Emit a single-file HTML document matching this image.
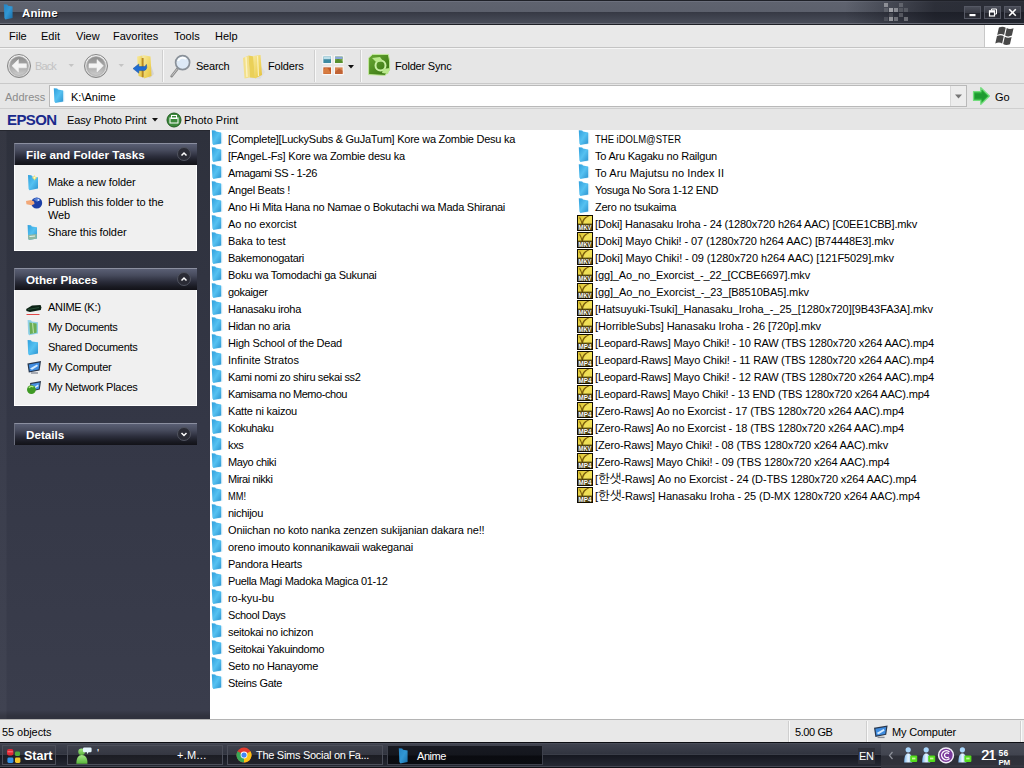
<!DOCTYPE html>
<html lang="en"><head><meta charset="utf-8"><title>Anime</title>
<style>
*{box-sizing:border-box;margin:0;padding:0}
html,body{width:1024px;height:768px;overflow:hidden;background:#fff}
body{position:relative;font-family:"Liberation Sans","NanumGothic","Noto Sans CJK KR",sans-serif;font-size:11px;color:#000;line-height:13px}
.abs{position:absolute}
#title{position:absolute;left:0;top:0;width:1024px;height:25px;background:#3b3e4a}
#title .g1{position:absolute;left:0;top:1px;width:1024px;height:22px;background:linear-gradient(90deg,rgba(14,16,24,0) 0,rgba(14,16,24,0) 845px,rgba(14,16,24,.62) 935px,rgba(14,16,24,.66) 1024px)}
#title .hi{position:absolute;left:0;top:1px;width:1024px;height:11px;background:linear-gradient(180deg,#6c707d 0,#6c707d 1px,#5f636f 1px,#5c606c 100%)}
#title .lo{position:absolute;left:0;top:12px;width:1024px;height:12px;background:linear-gradient(180deg,#363944 0,#474b57 10px,#474b57 11px,#6a6d78 11px,#6a6d78 12px)}
#title .tl{position:absolute;left:0;top:0;width:1024px;height:1px;background:#1f2128}
#title .bl{position:absolute;left:0;top:24px;width:1024px;height:1px;background:#1d1f25}
#title .cap{position:absolute;left:22px;top:7px;font-weight:bold;font-size:11.5px;color:#fff;text-shadow:1px 1px 0 #15161b;letter-spacing:.1px}
.wb{position:absolute;top:6px;width:17px;height:13px;border:1px solid #555864;background:linear-gradient(180deg,#4a4d58 0,#3a3c46 50%,#22242c 51%,#2b2d36 100%)}
#menu{position:absolute;left:0;top:25px;width:1024px;height:23px;background:#e9e9e9;border-bottom:1px solid #c4c4c4}
#menu span{position:absolute;top:5px;font-size:11px}
#logo{position:absolute;left:984px;top:25px;width:40px;height:22px;background:#fff;border-left:1px solid #c8c8c8}
#tb{position:absolute;left:0;top:48px;width:1024px;height:36px;background:#e6e6e6;border-bottom:1px solid #c9c9c9;box-shadow:inset 0 1px 0 #f6f6f6}
#tb .sep{position:absolute;top:2px;width:2px;height:32px;border-left:1px solid #cfcfcf;border-right:1px solid #f8f8f8}
#tb .lb{position:absolute;top:12px;font-size:11px}
#addr{position:absolute;left:0;top:84px;width:1024px;height:25px;background:#e6e6e6;border-bottom:1px solid #cfcfcf}
#addr .in{position:absolute;left:49px;top:1px;width:918px;height:22px;background:#fff;border:1px solid #b9b9b9}
#eps{position:absolute;left:0;top:109px;width:1024px;height:21px;background:#e6e6e6}
#side{position:absolute;left:0;top:130px;width:210px;height:589px;background:linear-gradient(90deg,rgba(255,255,255,.03) 0,rgba(255,255,255,.03) 6px,rgba(255,255,255,0) 7px),linear-gradient(180deg,#2e313c 0,#343746 50%,#3a3d4c 98.5%,#30323e 99.5%,#30323e 100%);box-shadow:inset 0 1px 0 #25272f}
.ph{position:absolute;left:14px;width:183px;height:22px;background:linear-gradient(180deg,#5a5f74 0,#474b5d 30%,#2b2d3b 60%,#191a22 85%,#121218 100%);border-top:1px solid #8b8fa0;border-left:1px solid #6a6d7c;color:#fff;font-weight:bold;font-size:11.7px;padding:4px 0 0 11px}
.ph .c{position:absolute;right:6px;top:3px;width:14px;height:14px;border-radius:50%;border:1px solid #50535f;background:#2a2b35}
.pb{position:absolute;left:14px;width:183px;background:#f0f0f0;box-shadow:inset -1px -1px 0 #fff,inset 1px 0 0 #fff}
.pb .t{position:absolute;left:34px;font-size:11px;white-space:nowrap}
.pb svg{position:absolute}
#files{position:absolute;left:210px;top:130px;width:814px;height:589px;background:#fff}
.it{position:absolute;height:17px;white-space:nowrap}
.it .ic{position:absolute;left:0;top:0}
.it .tx{position:absolute;left:18px;top:3px;font-size:11px;line-height:13px}
.it.r .tx{left:18px}
.vl{font-family:"Liberation Sans",sans-serif;font-weight:bold;font-size:7px;fill:#fff;stroke:#1e1700;stroke-width:.5px;paint-order:stroke}
#st{position:absolute;left:0;top:719px;width:1024px;height:23px;background:#e8e8e8;border-top:1px solid #b4b4b4}
#st span{position:absolute;top:6px;white-space:nowrap}
#tk{position:absolute;left:0;top:742px;width:1024px;height:26px;background:linear-gradient(180deg,#0d0e13 0,#0d0e13 1px,#4a4d59 1px,#4a4d59 2px,#3f424e 2px,#31343f 12px,#3a3d48 12px,#3a3d48 13px,#151720 13px,#262933 24px,#444753 24px,#444753 25px,#111217 25px,#111217 26px)}
.tbtn{position:absolute;top:3px;height:20px;border:1px solid #4c4f5a;background:linear-gradient(180deg,#3e414c 0,#353742 48%,#1c1d24 52%,#22232b 100%);color:#fff;font-size:11px}
.tbtn span{position:absolute;top:3px;white-space:nowrap}

#title .px{position:absolute;width:4px;height:4px;background:#fff}

</style></head><body>
<svg width="0" height="0" style="position:absolute">
<defs>
<linearGradient id="fg" x1="0" y1="0" x2="1" y2="1"><stop offset="0" stop-color="#2f9fdc"/><stop offset=".5" stop-color="#55c1f1"/><stop offset="1" stop-color="#2c93cf"/></linearGradient>
<linearGradient id="fs" x1="0" y1="0" x2="1" y2="0"><stop offset="0" stop-color="#bfe4f8"/><stop offset="1" stop-color="#ffffff"/></linearGradient><g id="fold"><path d="M8.5 2.6 L13.6 3.4 L13.6 13.6 L8.5 14.4Z" fill="url(#fs)"/><path d="M1.8 0.2 L5.2 0.5 L6 1.6 L11.2 2.4 L11.2 13.6 L3.4 15 L2.4 13.6 Z" fill="url(#fg)"/></g><g id="fold2"><path d="M1.8 0.2 L5.2 0.5 L6 1.6 L10.6 2.4 L10.6 13.2 L3.4 14.6 L2.4 13.2 Z" fill="url(#fg2)"/></g><linearGradient id="fg2" x1="0" y1="0" x2="1" y2="1"><stop offset="0" stop-color="#2583c2"/><stop offset=".5" stop-color="#3197d4"/><stop offset="1" stop-color="#1a6ca6"/></linearGradient>
<linearGradient id="vg" x1="0" y1="0" x2="1" y2="1"><stop offset="0" stop-color="#d9bf2c"/><stop offset=".5" stop-color="#f2e25a"/><stop offset="1" stop-color="#e0c838"/></linearGradient>
<g id="vid"><rect x="0" y="0" width="16" height="16" fill="#120d00"/><rect x="1" y="1" width="14" height="14" fill="url(#vg)"/><path d="M2 2.5 C3.2 4.5 4 6.5 4.6 9 L6 9 C6.5 5.5 8.5 2.8 12.5 1 L10.5 1 C7.5 2.2 5.8 4.2 5 6.8 C4.6 5.2 4 3.8 3.2 2.5Z" fill="#7a5c0c"/><rect x="1" y="8.6" width="14" height="6.4" fill="#3a2c02" opacity=".8"/></g>
</defs>
</svg>
<div id="title"><div class="hi"></div><div class="lo"></div><div class="g1"></div><div class="tl"></div><div class="bl"></div><div class="px" style="left:884px;top:3px;opacity:0.38"></div><div class="px" style="left:899px;top:3px;opacity:0.18"></div><div class="px" style="left:884px;top:8px;opacity:0.12"></div><div class="px" style="left:889px;top:8px;opacity:0.50"></div><div class="px" style="left:894px;top:8px;opacity:0.38"></div><div class="px" style="left:899px;top:8px;opacity:0.12"></div><div class="px" style="left:904px;top:8px;opacity:0.14"></div><div class="px" style="left:889px;top:13px;opacity:0.12"></div><div class="px" style="left:899px;top:13px;opacity:0.20"></div><div class="px" style="left:884px;top:17px;opacity:0.12"></div><div class="px" style="left:889px;top:17px;opacity:0.48"></div><div class="px" style="left:894px;top:17px;opacity:0.30"></div><div class="px" style="left:904px;top:17px;opacity:0.30"></div>
<svg class="abs" style="left:2px;top:4px" width="14" height="16" viewBox="0 0 14 15" preserveAspectRatio="none"><use href="#fold2"/></svg>
<div class="cap">Anime</div>
<div class="wb" style="left:964px"><svg width="15" height="11"><rect x="4.5" y="7" width="6" height="2.2" fill="#fff"/></svg></div>
<div class="wb" style="left:984px"><svg width="15" height="11"><path d="M6.5 3.5 V2 H11.5 V7 H10" fill="none" stroke="#fff" stroke-width="1"/><rect x="4.5" y="4" width="5" height="5" fill="none" stroke="#fff" stroke-width="1.2"/><rect x="4" y="3.5" width="6" height="2" fill="#fff"/></svg></div>
<div class="wb" style="left:1004px"><svg width="15" height="11"><path d="M4.2 2.2 L10.8 8.8 M10.8 2.2 L4.2 8.8" stroke="#fff" stroke-width="1.6"/></svg></div>
</div>
<div id="menu"><span style="left:9px">File</span><span style="left:41px">Edit</span><span style="left:76px">View</span><span style="left:113px">Favorites</span><span style="left:174px">Tools</span><span style="left:215px">Help</span>
<div id="logo" style="top:0"><svg width="39" height="22" viewBox="0 0 39 22"><g fill="#484848" transform="translate(9.6,1.4) scale(1.14,1.07) skewX(-12)"><path d="M4 1 C6 0 8 0 10 1.2 L10 8 C8 6.8 6 6.8 4 8Z"/><path d="M11 1.6 C13 2.8 15 2.8 17 1.8 L17 8.6 C15 9.6 13 9.6 11 8.4Z"/><path d="M4 9 C6 8 8 8 10 9.2 L10 16 C8 14.8 6 14.8 4 16Z"/><path d="M11 9.6 C13 10.8 15 10.8 17 9.8 L17 16.6 C15 17.6 13 17.6 11 16.4Z"/></g></svg></div>
</div>
<div id="tb">
<svg class="abs" style="left:0;top:0" width="420" height="36" viewBox="0 48 420 36">
<defs>
<linearGradient id="bg1" x1="0" y1="0" x2="0" y2="1"><stop offset="0" stop-color="#f2f2f2"/><stop offset="1" stop-color="#c9c9c9"/></linearGradient>
<linearGradient id="bg2" x1="0" y1="0" x2="0" y2="1"><stop offset="0" stop-color="#8e8e8e"/><stop offset=".55" stop-color="#ababab"/><stop offset="1" stop-color="#cdcdcd"/></linearGradient>
<linearGradient id="yg" x1="0" y1="0" x2="1" y2="1"><stop offset="0" stop-color="#f7e9a0"/><stop offset=".6" stop-color="#efd45c"/><stop offset="1" stop-color="#e3bf3c"/></linearGradient>
<linearGradient id="gg" x1="0" y1="0" x2="1" y2="1"><stop offset="0" stop-color="#6aaa34"/><stop offset="1" stop-color="#34700f"/></linearGradient>
<g id="navc"><circle cx="0" cy="0" r="11.5" fill="url(#bg1)" stroke="#858585"/><circle cx="0" cy="0" r="9.4" fill="url(#bg2)" stroke="#a8a8a8" stroke-width=".6"/></g>
</defs>
<use href="#navc" x="19" y="66"/><path d="M12 65.8 L18.4 59.6 L18.4 63.8 L26.4 63.8 L26.4 67.8 L18.4 67.8 L18.4 72Z" fill="#f4f4f4" stroke="#f4f4f4" stroke-width=".6" stroke-linejoin="round"/>
<path d="M68.5 64 H74 L71.25 67Z" fill="#c4c4c4"/>
<use href="#navc" x="96" y="66"/><path d="M103.4 65.8 L97 59.6 L97 63.8 L89 63.8 L89 67.8 L97 67.8 L97 72Z" fill="#f4f4f4" stroke="#f4f4f4" stroke-width=".6" stroke-linejoin="round"/>
<path d="M118.5 64 H124 L121.25 67Z" fill="#c4c4c4"/>
<!-- up folder -->
<path d="M149 60 L154 74 L150 78 L146 76Z" fill="#d4d4d4"/>
<path d="M137 56.5 L142.5 55.5 L143 77.5 L138.5 76Z" fill="url(#yg)"/>
<path d="M143 55 L150.5 56.5 L151.5 76 L144 78.5Z" fill="url(#yg)"/>
<path d="M141.6 58 L143.6 58 L143.8 77.5 L141.8 77Z" fill="#b98a20"/>
<path d="M133 68.6 L138.8 64 L138.8 66.6 L143.6 66.6 C145 66.6 146 65.6 146.4 64.4 L146.8 67.4 C146.4 69.6 145 70.6 143.6 70.6 L138.8 70.6 L138.8 73.2Z" fill="#1f6cd2" stroke="#184f9e" stroke-width=".5"/>
<!-- search -->
<path d="M177.6 68.6 L171.6 76.2" stroke="#8b8b8b" stroke-width="2.6" stroke-linecap="round"/>
<path d="M177.2 69 L172 75.6" stroke="#c9c9c9" stroke-width="1" stroke-linecap="round"/>
<circle cx="182.6" cy="62.6" r="7" fill="#dde9f6" stroke="#8a9199" stroke-width="1.7"/>
<path d="M178 61 A5 5 0 0 1 186 59" stroke="#ffffff" stroke-width="2" fill="none" opacity=".9"/>
<!-- folders -->
<path d="M258 62 L265 72 L260 79 L250 78Z" fill="#dadada" opacity=".7"/>
<path d="M243 58 L248.5 55.5 L250 77.5 L244.5 78.5Z" fill="#f3e08a"/>
<path d="M248.5 55.5 L254 56.5 L255 78 L250 77.5Z" fill="#ead058"/>
<path d="M253 56 L260.5 55 L262 75 L255 78.5Z" fill="url(#yg)"/>
<path d="M246 57 L247 77" stroke="#fbf2c4" stroke-width="1.4"/>
<path d="M257.5 56 L258.5 76" stroke="#faf0bc" stroke-width="1.2"/>
<!-- views -->
<g stroke="#fbfbfb" stroke-width="1.1"><rect x="322.8" y="56" width="8.8" height="7.6" fill="#3f8aa2"/><rect x="334.4" y="56" width="8.8" height="7.6" fill="#74a440"/><rect x="322.8" y="66.8" width="8.8" height="7.8" fill="#c25a28"/><rect x="334.4" y="66.8" width="8.8" height="7.8" fill="#d68450"/></g><path d="M323.4 70 a3 3 0 0 1 5 -1 l2.6 4.8 h-7.6z" fill="#e08a4a" opacity=".7"/><path d="M335 72 l4 -3.6 l3.6 2.4 v3.2 h-7.6z" fill="#b8552a" opacity=".7"/><path d="M335 61 l3 -2.4 l4.6 3 v1.4 h-7.6z" fill="#4f8a2a" opacity=".8"/>
<rect x="323.4" y="56.6" width="7.4" height="2.6" fill="#bfe0ea"/><rect x="335" y="56.6" width="7.6" height="2.4" fill="#8aa6d8"/>
<path d="M348 65 H354 L351 68.4Z" fill="#101010"/>
<!-- folder sync -->
<path d="M368.6 58 L372.5 54.4 L388.4 54.4 L389.6 61 L389.6 70 L385 75.4 L368.6 74.6Z" fill="url(#gg)" stroke="#c2eb9a" stroke-width="1"/>
<circle cx="380.5" cy="65.5" r="5" fill="none" stroke="#c9f0a4" stroke-width="2"/>
<path d="M372 58 L380 57 L383 61 L376 62Z" fill="#b9e88c"/><path d="M383 69 L390 68 L388 74 L382 73Z" fill="#b9e88c"/>
</svg>
<span class="lb" style="left:35px;color:#c2c2c2;letter-spacing:-.9px">Back</span>
<div class="sep" style="left:162px"></div>
<span style="letter-spacing:-0.227px;left:196px" class="lb">Search</span>
<span style="letter-spacing:-0.170px;left:268px" class="lb">Folders</span>
<div class="sep" style="left:314px"></div>
<div class="sep" style="left:360px"></div>
<span style="letter-spacing:-0.200px;left:395px" class="lb">Folder Sync</span>
</div>
<div id="addr"><span class="abs" style="left:5px;top:7px;color:#8c8c8c">Address</span>
<div class="in"><svg class="abs" style="left:2px;top:2px" width="16" height="16" viewBox="0 0 16 16"><use href="#fold"/></svg><span class="abs" style="left:21px;top:5px">K:\Anime</span></div>
<div class="abs" style="left:950px;top:2px;width:16px;height:20px;background:#ededed;border-left:1px solid #d9d9d9"></div><svg class="abs" style="left:955px;top:10px" width="8" height="6"><path d="M0 0.5H7L3.5 4.5Z" fill="#777"/></svg>
<svg class="abs" style="left:972px;top:2px" width="20" height="20"><path d="M1.5 5.6 L8.8 5.6 L8.8 1.6 L17.4 10 L8.8 18.4 L8.8 14.4 L1.5 14.4Z" fill="#2bb03a" stroke="#72dc7c" stroke-width="1.2" stroke-linejoin="round"/><path d="M3 7.4 L10.2 7.4 L10.2 5 L15.2 10 L10.2 15 L10.2 12.6 L3 12.6Z" fill="#1e9a30"/></svg>
<span class="abs" style="left:995px;top:7px">Go</span>
</div>
<div id="eps"><span class="abs" style="left:7px;top:3px;font-weight:bold;font-size:15px;line-height:16px;color:#1a2a8c;letter-spacing:-.6px">EPSON</span>
<span class="abs" style="left:67px;top:5px;letter-spacing:-.15px">Easy Photo Print</span>
<svg class="abs" style="left:152px;top:9px" width="7" height="5"><path d="M0 0H6L3 3.5Z" fill="#111"/></svg>
<svg class="abs" style="left:166px;top:3px" width="16" height="16"><circle cx="8" cy="8" r="7" fill="#3c8a3c" stroke="#1f5c20"/><rect x="4" y="6" width="8" height="5" fill="none" stroke="#fff"/><rect x="5.5" y="3.5" width="5" height="3" fill="none" stroke="#fff"/></svg>
<span class="abs" style="left:184px;top:5px">Photo Print</span>
</div>

<div id="side">
<div class="ph" style="top:13px">File and Folder Tasks<div class="c"><svg width="12" height="12"><path d="M3.5 7.5 L6 5 L8.5 7.5" stroke="#fff" stroke-width="1.5" fill="none"/></svg></div></div>
<div class="pb" style="top:35px;height:86px">
<svg style="left:0;top:0" width="183" height="86" viewBox="14 165 183 86">
<path d="M28 175 L31.4 175.3 L32.2 176.4 L38 177.2 L38 188.6 L29.6 190.2 L28.6 189 Z" fill="url(#fg)"/>
<path d="M34.5 175 l.9 1.9 1.9.9 -1.9.9 -.9 1.9 -.9-1.9 -1.9-.9 1.9-.9z" fill="#ffe35a"/><circle cx="34.5" cy="177.8" r="1" fill="#fff9c8"/>
<circle cx="36.7" cy="203" r="5.5" fill="#1c3fa6"/><path d="M33.5 199.5 A5 5 0 0 1 39 198.2 L37.5 202 Z" fill="#5f8fe0" opacity=".8"/><circle cx="38.5" cy="200" r="1.1" fill="#dfe8ff"/>
<path d="M26 201 L31 200 L34 201.6 L34.5 204 L31.5 205.2 L26.5 204.2Z" fill="#f2a878"/>
<path d="M27.6 225 L31 225.3 L31.8 226.4 L37 227.2 L37 238.6 L29.2 240 L28.2 239 Z" fill="url(#fg)"/>
<path d="M28 235 L36.6 234 L36.8 238.6 L29.2 240 L28.2 239Z" fill="#8fb7a0"/><path d="M29.5 236.5 L35 236" stroke="#e8f2ea" stroke-width="1"/>
</svg>
<span style="letter-spacing:-0.141px;top:11px" class="t">Make a new folder</span>
<span style="letter-spacing:-0.073px;top:31px" class="t">Publish this folder to the</span><span style="letter-spacing:-0.141px;top:44px" class="t">Web</span>
<span style="letter-spacing:-0.095px;top:61px" class="t">Share this folder</span>
</div>
<div class="ph" style="top:138px">Other Places<div class="c"><svg width="12" height="12"><path d="M3.5 7.5 L6 5 L8.5 7.5" stroke="#fff" stroke-width="1.5" fill="none"/></svg></div></div>
<div class="pb" style="top:160px;height:116px">
<svg style="left:0;top:0" width="183" height="116" viewBox="14 290 183 116">
<path d="M26.2 309 L32 305.6 L40.6 305 L41.4 307.6 L40.8 310 L30 312 L26.4 311Z" fill="#0d2316"/><path d="M28 309.5 L39 307.6" stroke="#2f5a40" stroke-width=".8"/>
<path d="M26.5 314.5 H39.5" stroke="#e04848" stroke-width="1"/>
<path d="M27.6 320 L31 320.3 L31.8 321.4 L38 322.2 L38 333.6 L29.2 335.2 L28.2 334 Z" fill="#8fd0e6"/><path d="M29.4 322.4 L36.6 323.4 L36.6 332.8 L30 334Z" fill="#6aae54"/><path d="M32.5 323 L33.5 333" stroke="#b4dca0" stroke-width="1.2"/>
<path d="M27.6 340 L31 340.3 L31.8 341.4 L38 342.2 L38 353.6 L29.2 355.2 L28.2 354 Z" fill="url(#fg)"/>
<path d="M27.4 363.4 L41 361 L39.6 370.4 L28.8 372.6Z" fill="#27364c"/><path d="M28.8 364.4 L39.6 362.6 L38.6 369.6 L29.8 371.2Z" fill="#3f8ce0"/><path d="M30 368.5 L37 364.5 L38 366 L32 369.8Z" fill="#d6ecff"/><path d="M31 373 H38" stroke="#8a8f98" stroke-width="1.4"/>
<path d="M30 383 L41 381 L39.8 389.6 L31 391.4Z" fill="#27364c"/><path d="M31.2 384 L39.8 382.4 L38.8 388.8 L32 390.2Z" fill="#4a94e4"/><path d="M33 388 L38 384.6 L38.6 386 L34 389Z" fill="#d6ecff"/>
<circle cx="31.4" cy="389.6" r="4.4" fill="#3f9a24"/><path d="M29 388 A3 3 0 0 1 33.5 387" stroke="#b6ec88" stroke-width="1.3" fill="none"/>
</svg>
<span style="letter-spacing:-0.312px;top:11px" class="t">ANIME (K:)</span>
<span style="letter-spacing:-0.322px;top:31px" class="t">My Documents</span>
<span style="letter-spacing:-0.292px;top:51px" class="t">Shared Documents</span>
<span style="letter-spacing:-0.230px;top:71px" class="t">My Computer</span>
<span style="letter-spacing:-0.273px;top:91px" class="t">My Network Places</span>
</div>
<div class="ph" style="top:293px">Details<div class="c"><svg width="12" height="12"><path d="M3.5 5 L6 7.5 L8.5 5" stroke="#fff" stroke-width="1.5" fill="none"/></svg></div></div>
</div>

<div id="files">
<div class="it" style="left:0px;top:0px"><svg class="ic" width="16" height="16" viewBox="0 0 16 16"><use href="#fold"/></svg><span class="tx" style="letter-spacing:-0.259px">[Complete][LuckySubs &amp; GuJaTum] Kore wa Zombie Desu ka</span></div>
<div class="it" style="left:0px;top:17px"><svg class="ic" width="16" height="16" viewBox="0 0 16 16"><use href="#fold"/></svg><span class="tx" style="letter-spacing:-0.225px">[FAngeL-Fs] Kore wa Zombie desu ka</span></div>
<div class="it" style="left:0px;top:34px"><svg class="ic" width="16" height="16" viewBox="0 0 16 16"><use href="#fold"/></svg><span class="tx" style="letter-spacing:-0.411px">Amagami SS - 1-26</span></div>
<div class="it" style="left:0px;top:51px"><svg class="ic" width="16" height="16" viewBox="0 0 16 16"><use href="#fold"/></svg><span class="tx" style="letter-spacing:-0.264px">Angel Beats !</span></div>
<div class="it" style="left:0px;top:68px"><svg class="ic" width="16" height="16" viewBox="0 0 16 16"><use href="#fold"/></svg><span class="tx" style="letter-spacing:-0.271px">Ano Hi Mita Hana no Namae o Bokutachi wa Mada Shiranai</span></div>
<div class="it" style="left:0px;top:85px"><svg class="ic" width="16" height="16" viewBox="0 0 16 16"><use href="#fold"/></svg><span class="tx" style="letter-spacing:-0.086px">Ao no exorcist</span></div>
<div class="it" style="left:0px;top:102px"><svg class="ic" width="16" height="16" viewBox="0 0 16 16"><use href="#fold"/></svg><span class="tx" style="letter-spacing:-0.049px">Baka to test</span></div>
<div class="it" style="left:0px;top:119px"><svg class="ic" width="16" height="16" viewBox="0 0 16 16"><use href="#fold"/></svg><span class="tx" style="letter-spacing:-0.294px">Bakemonogatari</span></div>
<div class="it" style="left:0px;top:136px"><svg class="ic" width="16" height="16" viewBox="0 0 16 16"><use href="#fold"/></svg><span class="tx" style="letter-spacing:-0.280px">Boku wa Tomodachi ga Sukunai</span></div>
<div class="it" style="left:0px;top:153px"><svg class="ic" width="16" height="16" viewBox="0 0 16 16"><use href="#fold"/></svg><span class="tx" style="letter-spacing:-0.338px">gokaiger</span></div>
<div class="it" style="left:0px;top:170px"><svg class="ic" width="16" height="16" viewBox="0 0 16 16"><use href="#fold"/></svg><span class="tx" style="letter-spacing:-0.290px">Hanasaku iroha</span></div>
<div class="it" style="left:0px;top:187px"><svg class="ic" width="16" height="16" viewBox="0 0 16 16"><use href="#fold"/></svg><span class="tx" style="letter-spacing:-0.264px">Hidan no aria</span></div>
<div class="it" style="left:0px;top:204px"><svg class="ic" width="16" height="16" viewBox="0 0 16 16"><use href="#fold"/></svg><span class="tx" style="letter-spacing:-0.228px">High School of the Dead</span></div>
<div class="it" style="left:0px;top:221px"><svg class="ic" width="16" height="16" viewBox="0 0 16 16"><use href="#fold"/></svg><span class="tx" style="letter-spacing:0.042px">Infinite Stratos</span></div>
<div class="it" style="left:0px;top:238px"><svg class="ic" width="16" height="16" viewBox="0 0 16 16"><use href="#fold"/></svg><span class="tx" style="letter-spacing:-0.355px">Kami nomi zo shiru sekai ss2</span></div>
<div class="it" style="left:0px;top:255px"><svg class="ic" width="16" height="16" viewBox="0 0 16 16"><use href="#fold"/></svg><span class="tx" style="letter-spacing:-0.447px">Kamisama no Memo-chou</span></div>
<div class="it" style="left:0px;top:272px"><svg class="ic" width="16" height="16" viewBox="0 0 16 16"><use href="#fold"/></svg><span class="tx" style="letter-spacing:-0.210px">Katte ni kaizou</span></div>
<div class="it" style="left:0px;top:289px"><svg class="ic" width="16" height="16" viewBox="0 0 16 16"><use href="#fold"/></svg><span class="tx" style="letter-spacing:-0.430px">Kokuhaku</span></div>
<div class="it" style="left:0px;top:306px"><svg class="ic" width="16" height="16" viewBox="0 0 16 16"><use href="#fold"/></svg><span class="tx" style="letter-spacing:-0.333px">kxs</span></div>
<div class="it" style="left:0px;top:323px"><svg class="ic" width="16" height="16" viewBox="0 0 16 16"><use href="#fold"/></svg><span class="tx" style="letter-spacing:-0.397px">Mayo chiki</span></div>
<div class="it" style="left:0px;top:340px"><svg class="ic" width="16" height="16" viewBox="0 0 16 16"><use href="#fold"/></svg><span class="tx" style="letter-spacing:-0.401px">Mirai nikki</span></div>
<div class="it" style="left:0px;top:357px"><svg class="ic" width="16" height="16" viewBox="0 0 16 16"><use href="#fold"/></svg><span class="tx" style="transform:scaleX(0.8415);transform-origin:0 0">MM!</span></div>
<div class="it" style="left:0px;top:374px"><svg class="ic" width="16" height="16" viewBox="0 0 16 16"><use href="#fold"/></svg><span class="tx" style="letter-spacing:-0.289px">nichijou</span></div>
<div class="it" style="left:0px;top:391px"><svg class="ic" width="16" height="16" viewBox="0 0 16 16"><use href="#fold"/></svg><span class="tx" style="letter-spacing:-0.148px">Oniichan no koto nanka zenzen sukijanian dakara ne!!</span></div>
<div class="it" style="left:0px;top:408px"><svg class="ic" width="16" height="16" viewBox="0 0 16 16"><use href="#fold"/></svg><span class="tx" style="letter-spacing:-0.195px">oreno imouto konnanikawaii wakeganai</span></div>
<div class="it" style="left:0px;top:425px"><svg class="ic" width="16" height="16" viewBox="0 0 16 16"><use href="#fold"/></svg><span class="tx" style="letter-spacing:-0.218px">Pandora Hearts</span></div>
<div class="it" style="left:0px;top:442px"><svg class="ic" width="16" height="16" viewBox="0 0 16 16"><use href="#fold"/></svg><span class="tx" style="letter-spacing:-0.319px">Puella Magi Madoka Magica 01-12</span></div>
<div class="it" style="left:0px;top:459px"><svg class="ic" width="16" height="16" viewBox="0 0 16 16"><use href="#fold"/></svg><span class="tx" style="letter-spacing:-0.052px">ro-kyu-bu</span></div>
<div class="it" style="left:0px;top:476px"><svg class="ic" width="16" height="16" viewBox="0 0 16 16"><use href="#fold"/></svg><span class="tx" style="letter-spacing:-0.388px">School Days</span></div>
<div class="it" style="left:0px;top:493px"><svg class="ic" width="16" height="16" viewBox="0 0 16 16"><use href="#fold"/></svg><span class="tx" style="letter-spacing:-0.257px">seitokai no ichizon</span></div>
<div class="it" style="left:0px;top:510px"><svg class="ic" width="16" height="16" viewBox="0 0 16 16"><use href="#fold"/></svg><span class="tx" style="letter-spacing:-0.333px">Seitokai Yakuindomo</span></div>
<div class="it" style="left:0px;top:527px"><svg class="ic" width="16" height="16" viewBox="0 0 16 16"><use href="#fold"/></svg><span class="tx" style="letter-spacing:-0.261px">Seto no Hanayome</span></div>
<div class="it" style="left:0px;top:544px"><svg class="ic" width="16" height="16" viewBox="0 0 16 16"><use href="#fold"/></svg><span class="tx" style="letter-spacing:-0.317px">Steins Gate</span></div>
<div class="it r" style="left:367px;top:0px"><svg class="ic" width="16" height="16" viewBox="0 0 16 16"><use href="#fold"/></svg><span class="tx" style="transform:scaleX(0.8618);transform-origin:0 0">THE iDOLM@STER</span></div>
<div class="it r" style="left:367px;top:17px"><svg class="ic" width="16" height="16" viewBox="0 0 16 16"><use href="#fold"/></svg><span class="tx" style="letter-spacing:-0.217px">To Aru Kagaku no Railgun</span></div>
<div class="it r" style="left:367px;top:34px"><svg class="ic" width="16" height="16" viewBox="0 0 16 16"><use href="#fold"/></svg><span class="tx" style="letter-spacing:0.070px">To Aru Majutsu no Index II</span></div>
<div class="it r" style="left:367px;top:51px"><svg class="ic" width="16" height="16" viewBox="0 0 16 16"><use href="#fold"/></svg><span class="tx" style="letter-spacing:-0.351px">Yosuga No Sora 1-12 END</span></div>
<div class="it r" style="left:367px;top:68px"><svg class="ic" width="16" height="16" viewBox="0 0 16 16"><use href="#fold"/></svg><span class="tx" style="letter-spacing:-0.249px">Zero no tsukaima</span></div>
<div class="it r" style="left:367px;top:85px"><svg class="ic" width="16" height="16" viewBox="0 0 16 16"><use href="#vid"/><text x="1.6" y="14.5" textLength="12.8" lengthAdjust="spacingAndGlyphs" class="vl">MKV</text></svg><span class="tx" style="letter-spacing:-0.164px">[Doki] Hanasaku Iroha - 24 (1280x720 h264 AAC) [C0EE1CBB].mkv</span></div>
<div class="it r" style="left:367px;top:102px"><svg class="ic" width="16" height="16" viewBox="0 0 16 16"><use href="#vid"/><text x="1.6" y="14.5" textLength="12.8" lengthAdjust="spacingAndGlyphs" class="vl">MKV</text></svg><span class="tx" style="letter-spacing:-0.116px">[Doki] Mayo Chiki! - 07 (1280x720 h264 AAC) [B74448E3].mkv</span></div>
<div class="it r" style="left:367px;top:119px"><svg class="ic" width="16" height="16" viewBox="0 0 16 16"><use href="#vid"/><text x="1.6" y="14.5" textLength="12.8" lengthAdjust="spacingAndGlyphs" class="vl">MKV</text></svg><span class="tx" style="letter-spacing:-0.084px">[Doki] Mayo Chiki! - 09 (1280x720 h264 AAC) [121F5029].mkv</span></div>
<div class="it r" style="left:367px;top:136px"><svg class="ic" width="16" height="16" viewBox="0 0 16 16"><use href="#vid"/><text x="1.6" y="14.5" textLength="12.8" lengthAdjust="spacingAndGlyphs" class="vl">MKV</text></svg><span class="tx" style="letter-spacing:-0.131px">[gg]_Ao_no_Exorcist_-_22_[CCBE6697].mkv</span></div>
<div class="it r" style="left:367px;top:153px"><svg class="ic" width="16" height="16" viewBox="0 0 16 16"><use href="#vid"/><text x="1.6" y="14.5" textLength="12.8" lengthAdjust="spacingAndGlyphs" class="vl">MKV</text></svg><span class="tx" style="letter-spacing:-0.095px">[gg]_Ao_no_Exorcist_-_23_[B8510BA5].mkv</span></div>
<div class="it r" style="left:367px;top:170px"><svg class="ic" width="16" height="16" viewBox="0 0 16 16"><use href="#vid"/><text x="1.6" y="14.5" textLength="12.8" lengthAdjust="spacingAndGlyphs" class="vl">MKV</text></svg><span class="tx" style="letter-spacing:-0.042px">[Hatsuyuki-Tsuki]_Hanasaku_Iroha_-_25_[1280x720][9B43FA3A].mkv</span></div>
<div class="it r" style="left:367px;top:187px"><svg class="ic" width="16" height="16" viewBox="0 0 16 16"><use href="#vid"/><text x="1.6" y="14.5" textLength="12.8" lengthAdjust="spacingAndGlyphs" class="vl">MKV</text></svg><span class="tx" style="letter-spacing:-0.073px">[HorribleSubs] Hanasaku Iroha - 26 [720p].mkv</span></div>
<div class="it r" style="left:367px;top:204px"><svg class="ic" width="16" height="16" viewBox="0 0 16 16"><use href="#vid"/><text x="1.6" y="14.5" textLength="12.8" lengthAdjust="spacingAndGlyphs" class="vl">MP4</text></svg><span class="tx" style="letter-spacing:-0.144px">[Leopard-Raws] Mayo Chiki! - 10 RAW (TBS 1280x720 x264 AAC).mp4</span></div>
<div class="it r" style="left:367px;top:221px"><svg class="ic" width="16" height="16" viewBox="0 0 16 16"><use href="#vid"/><text x="1.6" y="14.5" textLength="12.8" lengthAdjust="spacingAndGlyphs" class="vl">MP4</text></svg><span class="tx" style="letter-spacing:-0.131px">[Leopard-Raws] Mayo Chiki! - 11 RAW (TBS 1280x720 x264 AAC).mp4</span></div>
<div class="it r" style="left:367px;top:238px"><svg class="ic" width="16" height="16" viewBox="0 0 16 16"><use href="#vid"/><text x="1.6" y="14.5" textLength="12.8" lengthAdjust="spacingAndGlyphs" class="vl">MP4</text></svg><span class="tx" style="letter-spacing:-0.144px">[Leopard-Raws] Mayo Chiki! - 12 RAW (TBS 1280x720 x264 AAC).mp4</span></div>
<div class="it r" style="left:367px;top:255px"><svg class="ic" width="16" height="16" viewBox="0 0 16 16"><use href="#vid"/><text x="1.6" y="14.5" textLength="12.8" lengthAdjust="spacingAndGlyphs" class="vl">MP4</text></svg><span class="tx" style="letter-spacing:-0.183px">[Leopard-Raws] Mayo Chiki! - 13 END (TBS 1280x720 x264 AAC).mp4</span></div>
<div class="it r" style="left:367px;top:272px"><svg class="ic" width="16" height="16" viewBox="0 0 16 16"><use href="#vid"/><text x="1.6" y="14.5" textLength="12.8" lengthAdjust="spacingAndGlyphs" class="vl">MP4</text></svg><span class="tx" style="letter-spacing:-0.100px">[Zero-Raws] Ao no Exorcist - 17 (TBS 1280x720 x264 AAC).mp4</span></div>
<div class="it r" style="left:367px;top:289px"><svg class="ic" width="16" height="16" viewBox="0 0 16 16"><use href="#vid"/><text x="1.6" y="14.5" textLength="12.8" lengthAdjust="spacingAndGlyphs" class="vl">MP4</text></svg><span class="tx" style="letter-spacing:-0.100px">[Zero-Raws] Ao no Exorcist - 18 (TBS 1280x720 x264 AAC).mp4</span></div>
<div class="it r" style="left:367px;top:306px"><svg class="ic" width="16" height="16" viewBox="0 0 16 16"><use href="#vid"/><text x="1.6" y="14.5" textLength="12.8" lengthAdjust="spacingAndGlyphs" class="vl">MKV</text></svg><span class="tx" style="letter-spacing:-0.139px">[Zero-Raws] Mayo Chiki! - 08 (TBS 1280x720 x264 AAC).mkv</span></div>
<div class="it r" style="left:367px;top:323px"><svg class="ic" width="16" height="16" viewBox="0 0 16 16"><use href="#vid"/><text x="1.6" y="14.5" textLength="12.8" lengthAdjust="spacingAndGlyphs" class="vl">MP4</text></svg><span class="tx" style="letter-spacing:-0.134px">[Zero-Raws] Mayo Chiki! - 09 (TBS 1280x720 x264 AAC).mp4</span></div>
<div class="it r" style="left:367px;top:340px"><svg class="ic" width="16" height="16" viewBox="0 0 16 16"><use href="#vid"/><text x="1.6" y="14.5" textLength="12.8" lengthAdjust="spacingAndGlyphs" class="vl">MP4</text></svg><span class="tx" style="letter-spacing:-0.110px">[<span class="k" style="font-size:12.5px;line-height:11px">한샛</span>-Raws] Ao no Exorcist - 24 (D-TBS 1280x720 x264 AAC).mp4</span></div>
<div class="it r" style="left:367px;top:357px"><svg class="ic" width="16" height="16" viewBox="0 0 16 16"><use href="#vid"/><text x="1.6" y="14.5" textLength="12.8" lengthAdjust="spacingAndGlyphs" class="vl">MP4</text></svg><span class="tx" style="letter-spacing:-0.084px">[<span class="k" style="font-size:12.5px;line-height:11px">한샛</span>-Raws] Hanasaku Iroha - 25 (D-MX 1280x720 x264 AAC).mp4</span></div>
</div>
<div id="st"><span style="letter-spacing:-0.066px;left:2px">55 objects</span>
<div class="abs" style="left:788px;top:1px;width:2px;height:21px;background:#cfcfcf;border-right:1px solid #fafafa"></div><span style="letter-spacing:-0.408px;left:795px">5.00 GB</span>
<div class="abs" style="left:866px;top:1px;width:2px;height:21px;background:#cfcfcf;border-right:1px solid #fafafa"></div><div class="abs" style="left:1020px;top:1px;width:2px;height:21px;background:#cfcfcf;border-right:1px solid #fafafa"></div>
<svg class="abs" style="left:873px;top:4px" width="16" height="16" viewBox="26.4 359.6 16 16"><path d="M27.4 363.4 L41 361 L39.6 370.4 L28.8 372.6Z" fill="#27364c"/><path d="M28.8 364.4 L39.6 362.6 L38.6 369.6 L29.8 371.2Z" fill="#3f8ce0"/><path d="M30 368.5 L37 364.5 L38 366 L32 369.8Z" fill="#d6ecff"/><path d="M31 373 H38" stroke="#8a8f98" stroke-width="1.4"/></svg><span style="letter-spacing:-0.185px;left:892px">My Computer</span></div>
<div id="tk">
<div class="tbtn" style="left:2px;width:54px"><svg class="abs" style="left:3px;top:2px" width="16" height="16"><rect x="1" y="1" width="6.4" height="6.6" rx="2" fill="#e32834"/><rect x="1.6" y="3" width="5.2" height="1.4" fill="#f06a70"/><rect x="9" y="3.6" width="5" height="4.4" rx="1.2" fill="#4cab3c"/><rect x="1.4" y="9.6" width="6" height="5.4" rx="1.4" fill="#3592e6"/><rect x="9" y="9.6" width="5.4" height="5.4" rx="1.4" fill="#f4c62a"/></svg><span style="left:21px;top:4px;font-weight:bold;font-size:12.5px">Start</span></div>
<div class="tbtn" style="left:67px;width:156px"><svg class="abs" style="left:7px;top:0px" width="20" height="19" viewBox="75 745.6 20 19"><defs><linearGradient id="mg2" x1="0" y1="0" x2="0" y2="1"><stop offset="0" stop-color="#a4e688"/><stop offset="1" stop-color="#58b43a"/></linearGradient></defs><circle cx="81.6" cy="751.4" r="3.3" fill="url(#mg2)"/><path d="M76.4 763.4 C76.2 757.5 78.4 754.6 81.8 754.6 C85.4 754.6 87.8 757.5 87.4 763.4Z" fill="url(#mg2)"/><path d="M84.2 747 H90.4 Q91.6 747 91.6 748.2 V750.6 Q91.6 751.8 90.4 751.8 H88.6 L87 753.8 L87 751.8 H84.2 Q83 751.8 83 750.6 V748.2 Q83 747 84.2 747Z" fill="#e4f4fc"/></svg><span style="left:29px;top:1px">'</span><span style="letter-spacing:0.281px;left:109px">+.M...</span></div>
<div class="tbtn" style="left:227px;width:156px"><svg class="abs" style="left:8px;top:1px" width="16" height="16"><circle cx="8" cy="8" r="7.5" fill="#e33b2e"/><path d="M8 8 L1.5 4.2 A7.5 7.5 0 0 0 8 15.5 Z" fill="#3aa757"/><path d="M8 8 L8 15.5 A7.5 7.5 0 0 0 14.5 4.2 Z" fill="#fbc116"/><circle cx="8" cy="8" r="3.4" fill="#fff"/><circle cx="8" cy="8" r="2.6" fill="#4285f4"/></svg><span style="letter-spacing:-0.285px;left:28px">The Sims Social on Fa...</span></div>
<div class="tbtn" style="left:387px;width:156px;top:3px;height:20px;background:linear-gradient(180deg,#181a22 0,#14161d 9px,#0a0b10 10px,#0b0c11 100%);border-color:#3e414c"><svg class="abs" style="left:9px;top:2px" width="14" height="16" viewBox="0 0 14 15" preserveAspectRatio="none"><use href="#fold2"/></svg><span style="letter-spacing:-0.438px;left:29px;top:4px">Anime</span></div>
<div class="abs" style="left:858px;top:6px;width:17px;height:16px;background:#2d2f38"></div><span class="abs" style="left:859px;top:8px;color:#fff;letter-spacing:-.4px">EN</span>
<div class="abs" style="left:881px;top:1px;width:143px;height:25px;background:linear-gradient(180deg,#4b4e59 0,#41444f 12px,#2e3039 13px,#30323b 22px,#3a3c46 23px,#2a2c34 25px)"></div>
<svg class="abs" style="left:888px;top:9px" width="6" height="9"><path d="M4.5 1 L1.5 4.5 L4.5 8" stroke="#8e919b" stroke-width="1.2" fill="none"/></svg>
<svg class="abs" style="left:900px;top:4px" width="76" height="20" viewBox="900 746 76 20">
<defs><linearGradient id="mg" x1="0" y1="0" x2="1" y2="0"><stop offset="0" stop-color="#7db8ee"/><stop offset=".5" stop-color="#e8f5ff"/><stop offset="1" stop-color="#8cc4f2"/></linearGradient>
<g id="mm"><circle cx="4.6" cy="3.8" r="2.6" fill="#a9d6fb"/><path d="M0.6 16.5 C0.6 10 2 7.4 4.6 7.4 C7.2 7.4 8.6 10 8.6 16.5Z" fill="url(#mg)"/><rect x="6.6" y="9.4" width="7" height="6.6" rx="1" fill="#54dc1c"/><rect x="8.4" y="11.6" width="3.4" height="1.8" fill="#c8f8a0"/></g></defs>
<use href="#mm" x="903.6" y="746"/><use href="#mm" x="921.6" y="746"/><use href="#mm" x="957.8" y="746"/>
<circle cx="946" cy="755.3" r="7.4" fill="#7b3a9c" stroke="#f4eefa" stroke-width="1.5"/><path d="M949.5 752 A4.6 4.6 0 1 0 949.5 758.6" stroke="#fff" stroke-width="1.4" fill="none"/><path d="M948.8 753.8 A2.4 2.4 0 1 0 948.8 756.8" stroke="#fff" stroke-width="1.2" fill="none"/>
</svg>
<span class="abs" style="left:981px;top:6px;color:#fff;font-size:14.5px;line-height:14px;letter-spacing:-1.1px;text-shadow:.5px 0 0 #fff">21</span>
<span class="abs" style="left:998.5px;top:7px;color:#fff;font-size:8.5px;line-height:9px;font-weight:bold;letter-spacing:.3px">56</span>
<span class="abs" style="left:998.5px;top:16px;color:#fff;font-size:8px;line-height:9px;font-weight:bold;letter-spacing:-.4px">PM</span>
</div>

</body></html>
